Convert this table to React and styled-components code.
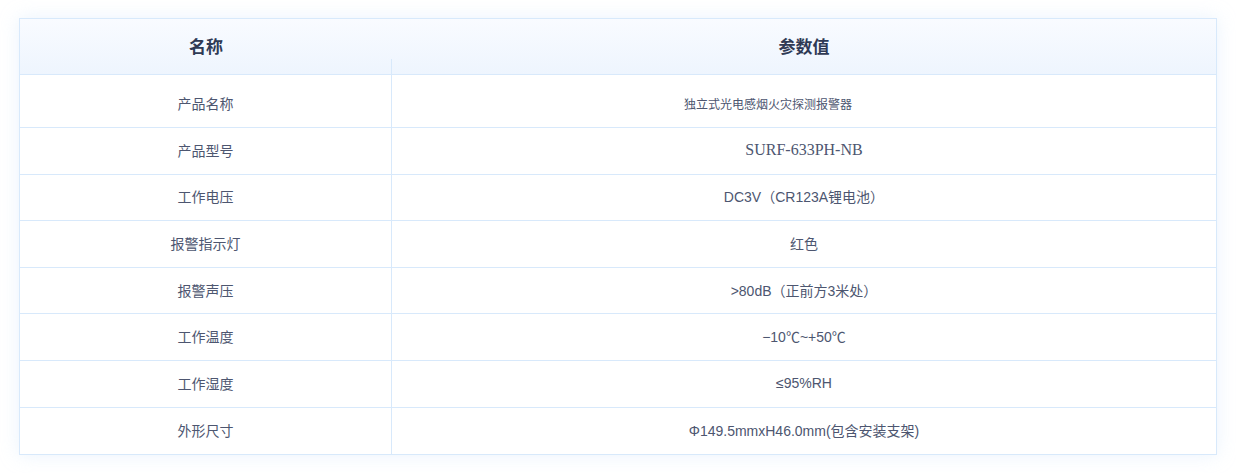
import React from "react";
import styled, { createGlobalStyle } from "styled-components";

const rows = [
  { name: "产品名称", value: "独立式光电感烟火灾探测报警器", small: true, first: true },
  { name: "产品型号", value: "SURF-633PH-NB", serif: true },
  { name: "工作电压", value: "DC3V（CR123A锂电池）" },
  { name: "报警指示灯", value: "红色" },
  { name: "报警声压", value: ">80dB（正前方3米处）" },
  { name: "工作温度", value: "−10℃~+50℃" },
  { name: "工作湿度", value: "≤95%RH" },
  { name: "外形尺寸", value: "Φ149.5mmxH46.0mm(包含安装支架)" },
];

const App = () => {
  return (
    <Page>
      <GlobalStyle />
      <Table>
        <HeadRow>
          <HeadCell>名称</HeadCell>
          <HeadCell divider>参数值</HeadCell>
        </HeadRow>
        {rows.map((r, i) => (
          <Row key={r.name} first={r.first} last={i === rows.length - 1}>
            <NameCell first={r.first}>{r.name}</NameCell>
            <ValueCell first={r.first} small={r.small} serif={r.serif}>
              {r.value}
            </ValueCell>
          </Row>
        ))}
      </Table>
    </Page>
  );
};

export default App;

const GlobalStyle = createGlobalStyle`
  body {
    margin: 0;
    background: #ffffff;
    font-family: "Liberation Sans", "Noto Sans CJK SC", sans-serif;
  }
`;

const Page = styled.div`
  padding: 18px 19px 20px;
`;

const Table = styled.div`
  width: 1198px;
  box-sizing: border-box;
  border: 1px solid #d8e9fb;
  background: #ffffff;
  box-shadow: 0 0 18px rgba(196, 220, 250, 0.35);
`;

const HeadRow = styled.div`
  display: grid;
  grid-template-columns: 372px 1fr;
  height: 56px;
  box-sizing: border-box;
  border-bottom: 1px solid #d8e9fb;
  background: linear-gradient(180deg, #f9fbff 0%, #eef5fe 100%);
`;

const HeadCell = styled.div`
  position: relative;
  display: flex;
  align-items: center;
  justify-content: center;
  padding-bottom: 2px;
  font-family: "Noto Sans CJK SC", sans-serif;
  font-size: 17px;
  font-weight: 700;
  color: #2f3a55;

  &::before {
    content: "";
    display: ${(p) => (p.divider ? "block" : "none")};
    position: absolute;
    left: -1px;
    bottom: 0;
    width: 1px;
    height: 15px;
    background: #d8e9fb;
  }
`;

const Row = styled.div`
  display: grid;
  grid-template-columns: 372px 1fr;
  height: ${(p) => (p.first ? "53px" : "46.6px")};
  box-sizing: border-box;
  border-bottom: ${(p) => (p.last ? "none" : "1px solid #d8e9fb")};
`;

const Cell = styled.div`
  display: flex;
  align-items: center;
  justify-content: center;
  box-sizing: border-box;
  padding-top: ${(p) => (p.first ? "4px" : "0")};
  padding-bottom: ${(p) => (p.first ? "0" : "2px")};
  color: #4d5670;
`;

const NameCell = styled(Cell)`
  border-right: 1px solid #d8e9fb;
  font-family: "Noto Sans CJK SC", sans-serif;
  font-size: 14px;
`;

const ValueCell = styled(Cell)`
  padding-right: ${(p) => (p.small ? "72px" : "0")};
  font-family: ${(p) =>
    p.serif
      ? '"Liberation Serif", serif'
      : '"Liberation Sans", "Noto Sans CJK SC", sans-serif'};
  font-size: ${(p) => (p.serif ? "16px" : p.small ? "12px" : "14px")};
`;
